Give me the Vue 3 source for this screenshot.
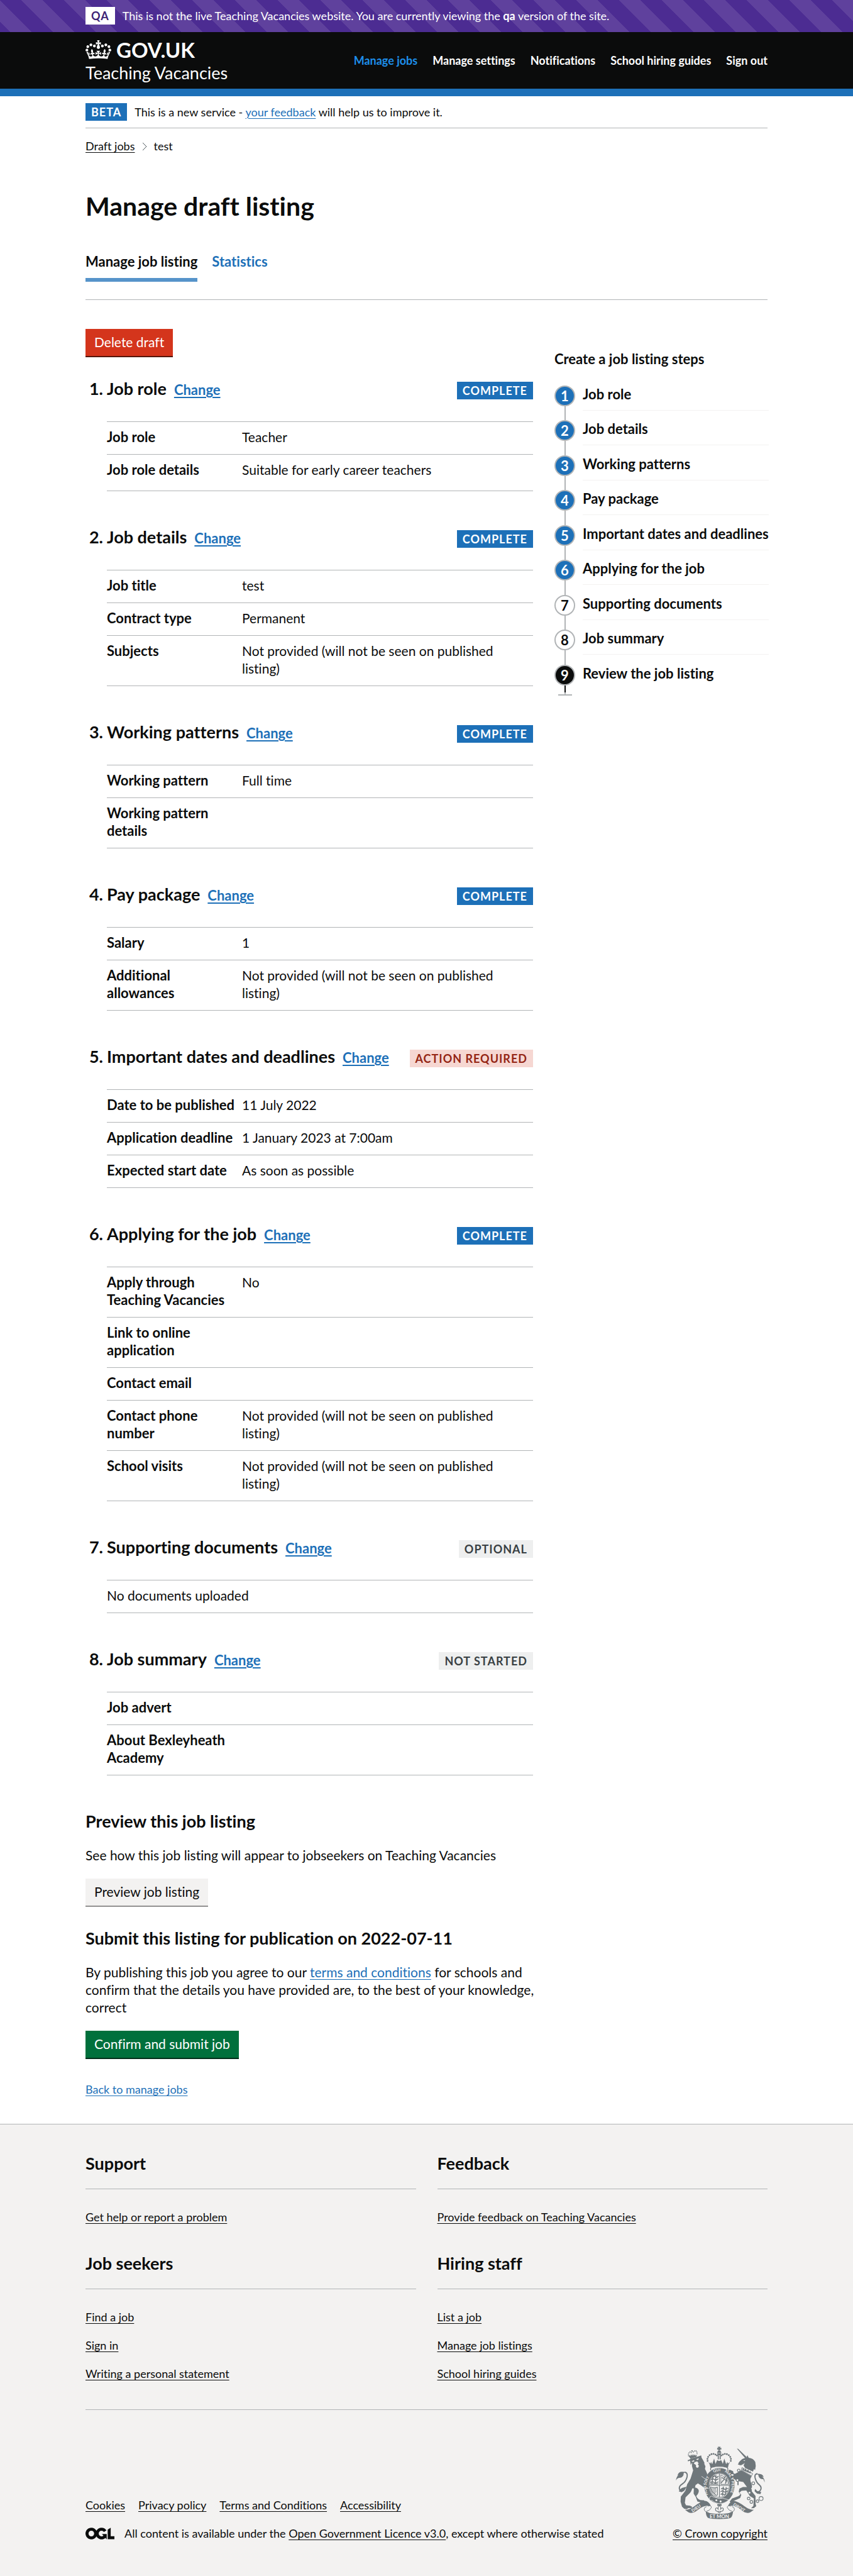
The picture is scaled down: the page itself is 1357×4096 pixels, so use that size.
<script setup>
const nav = [
  { label: 'Manage jobs', active: true },
  { label: 'Manage settings' },
  { label: 'Notifications' },
  { label: 'School hiring guides' },
  { label: 'Sign out' }
]

const missing = 'Not provided (will not be seen on published listing)'

const sections = [
  {
    title: 'Job role', status: 'Complete', tone: 'blue',
    rows: [
      { key: 'Job role', value: 'Teacher' },
      { key: 'Job role details', list: ['Suitable for early career teachers'] }
    ]
  },
  {
    title: 'Job details', status: 'Complete', tone: 'blue',
    rows: [
      { key: 'Job title', value: 'test' },
      { key: 'Contract type', value: 'Permanent' },
      { key: 'Subjects', value: missing }
    ]
  },
  {
    title: 'Working patterns', status: 'Complete', tone: 'blue',
    rows: [
      { key: 'Working pattern', value: 'Full time' },
      { key: 'Working pattern details', value: '' }
    ]
  },
  {
    title: 'Pay package', status: 'Complete', tone: 'blue',
    rows: [
      { key: 'Salary', value: '1' },
      { key: 'Additional allowances', value: missing }
    ]
  },
  {
    title: 'Important dates and deadlines', status: 'Action required', tone: 'red',
    rows: [
      { key: 'Date to be published', value: '11 July 2022' },
      { key: 'Application deadline', value: '1 January 2023 at 7:00am' },
      { key: 'Expected start date', value: 'As soon as possible' }
    ]
  },
  {
    title: 'Applying for the job', status: 'Complete', tone: 'blue',
    rows: [
      { key: 'Apply through Teaching Vacancies', value: 'No' },
      { key: 'Link to online application', value: '' },
      { key: 'Contact email', value: '' },
      { key: 'Contact phone number', value: missing },
      { key: 'School visits', value: missing }
    ]
  },
  { title: 'Supporting documents', status: 'Optional', tone: 'grey', note: 'No documents uploaded' },
  {
    title: 'Job summary', status: 'Not started', tone: 'grey',
    rows: [
      { key: 'Job advert', value: '' },
      { key: 'About Bexleyheath Academy', value: '' }
    ]
  }
]

const steps = [
  { label: 'Job role', state: 'done' },
  { label: 'Job details', state: 'done' },
  { label: 'Working patterns', state: 'done' },
  { label: 'Pay package', state: 'done' },
  { label: 'Important dates and deadlines', state: 'done' },
  { label: 'Applying for the job', state: 'done' },
  { label: 'Supporting documents', state: 'todo' },
  { label: 'Job summary', state: 'todo' },
  { label: 'Review the job listing', state: 'current' }
]

const footerColumns = [
  { title: 'Support', links: ['Get help or report a problem'] },
  { title: 'Feedback', links: ['Provide feedback on Teaching Vacancies'] },
  { title: 'Job seekers', links: ['Find a job', 'Sign in', 'Writing a personal statement'] },
  { title: 'Hiring staff', links: ['List a job', 'Manage job listings', 'School hiring guides'] }
]

const metaLinks = ['Cookies', 'Privacy policy', 'Terms and Conditions', 'Accessibility']

// Pearls along the two arches of the central crown
const pearls = [
  [429, 204], [428, 187], [434, 170], [446, 156], [462, 147], [479, 145], [495, 150], [508, 158],
  [625, 204], [626, 187], [620, 170], [608, 156], [592, 147], [575, 145], [559, 150], [546, 158]
]
const lionPearls = [
  [268, 160], [267, 147], [272, 135], [281, 127], [291, 133],
  [309, 128], [320, 120], [332, 120], [339, 130], [340, 143]
]
</script>

<template>
  <div class="page">
    <div class="env-banner">
      <div class="container env-inner">
        <strong class="tag tag-white">QA</strong>
        <span class="small">This is not the live Teaching Vacancies website. You are currently viewing the <b>qa</b> version of the site.</span>
      </div>
    </div>

    <header class="header">
      <div class="container header-inner">
        <div class="brand">
          <a class="logo" href="#">
            <svg class="crown" viewBox="0 0 132 97" aria-hidden="true">
              <path fill="currentColor" fill-rule="evenodd" d="M25 30.2c3.5 1.5 7.7-.2 9.1-3.7 1.5-3.6-.2-7.8-3.9-9.2-3.6-1.4-7.6.3-9.1 3.9-1.4 3.5.3 7.5 3.9 9zM9 39.5c3.6 1.5 7.8-.2 9.2-3.7 1.5-3.6-.2-7.8-3.9-9.1-3.6-1.5-7.6.2-9.1 3.8-1.4 3.5.3 7.5 3.8 9zM4.4 57.2c3.5 1.5 7.7-.2 9.1-3.8 1.5-3.6-.2-7.7-3.9-9.1-3.5-1.5-7.6.3-9.1 3.8-1.4 3.5.3 7.6 3.9 9.1zm38.3-21.4c3.5 1.5 7.7-.2 9.1-3.8 1.5-3.6-.2-7.7-3.9-9.1-3.6-1.5-7.6.3-9.1 3.8-1.3 3.6.4 7.7 3.9 9.1zm64.4-5.6c-3.6 1.5-7.8-.2-9.1-3.7-1.5-3.6.2-7.8 3.8-9.2 3.6-1.4 7.7.3 9.2 3.9 1.3 3.5-.4 7.5-3.9 9zm15.9 9.3c-3.6 1.5-7.7-.2-9.1-3.7-1.5-3.6.2-7.8 3.7-9.1 3.6-1.5 7.7.2 9.2 3.8 1.5 3.5-.3 7.5-3.8 9zm4.7 17.7c-3.6 1.5-7.8-.2-9.2-3.8-1.5-3.6.2-7.7 3.9-9.1 3.6-1.5 7.7.3 9.2 3.8 1.3 3.5-.4 7.6-3.9 9.1zM89.3 35.8c-3.6 1.5-7.8-.2-9.2-3.8-1.4-3.6.2-7.7 3.9-9.1 3.6-1.5 7.7.3 9.2 3.8 1.4 3.6-.3 7.7-3.9 9.1zM69.7 17.7l8.9 4.7V9.3l-8.9 2.8c-.2-.3-.5-.6-.9-.9L72.4 0H59.6l3.5 11.2c-.3.3-.6.5-.9.9l-8.8-2.8v13.1l8.8-4.7c.3.3.6.7.9.9l-5 15.4v.1c-.2.8-.4 1.6-.4 2.4 0 4.1 3.1 7.5 7 8.1h.2c.3 0 .7.1 1 .1.4 0 .7 0 1-.1h.2c4-.6 7.1-4.1 7.1-8.1 0-.8-.1-1.7-.4-2.4V34l-5.1-15.4c.4-.2.7-.6 1-.9zM66 92.8c16.9 0 32.8 1.1 47.1 3.2 4-16.9 8.9-26.7 14-33.5l-9.6-3.4c1 4.9 1.1 7.2 0 10.2-1.5-1.4-3-4.3-4.2-8.7L108.6 76c2.8-2 5-3.2 7.5-3.3-4.4 9.4-10 11.9-13.6 11.2-4.3-.8-6.3-4.6-5.6-7.9 1-4.7 5.7-5.9 8-.5 4.3-8.7-3-11.4-7.6-8.8 7.1-7.2 7.9-13.5 2.1-21.1-8 6.1-8.1 12.3-4.5 20.8-4.7-5.4-12.1-2.5-9.5 6.2 3.4-5.2 7.9-2 7.2 3.1-.6 4.3-6.4 7.8-13.5 7.2-10.3-.9-10.9-8-11.2-13.8 2.5-.5 7.1 1.8 11 7.3L80.2 60c-4.1 4.4-8 5.3-12.3 5.4 1.4-4.4 8-11.6 8-11.6H55.5s6.4 7.2 7.9 11.6c-4.2-.1-8-1-12.3-5.4l1.4 16.4c3.9-5.5 8.5-7.7 10.9-7.3-.3 5.8-.9 12.8-11.1 13.8-7.2.6-12.9-2.9-13.5-7.2-.7-5 3.8-8.3 7.1-3.1 2.7-8.7-4.6-11.6-9.4-6.2 3.7-8.5 3.6-14.7-4.6-20.8-5.8 7.6-5 13.9 2.2 21.1-4.7-2.6-11.9.1-7.7 8.8 2.3-5.5 7.1-4.2 8.1.5.7 3.3-1.3 7.1-5.7 7.9-3.5.7-9-1.8-13.5-11.2 2.5.1 4.7 1.3 7.5 3.3l-4.7-15.4c-1.2 4.4-2.7 7.2-4.3 8.7-1.1-3-.9-5.3 0-10.2l-9.5 3.4c5 6.9 9.9 16.7 14 33.5 14.8-2.1 30.8-3.2 47.7-3.2z" />
            </svg>
            <span>GOV.UK</span>
          </a>
          <a class="service" href="#">Teaching Vacancies</a>
        </div>
        <nav class="nav" aria-label="Main">
          <a v-for="item in nav" :key="item.label" href="#" :class="{ active: item.active }">{{ item.label }}</a>
        </nav>
      </div>
    </header>

    <div class="container">
      <div class="phase">
        <strong class="tag tag-blue">BETA</strong>
        <span class="small">This is a new service - <a class="link" href="#">your feedback</a> will help us to improve it.</span>
      </div>
      <nav class="crumbs small" aria-label="Breadcrumb">
        <a href="#">Draft jobs</a>
        <svg class="chevron" viewBox="0 0 8 14" aria-hidden="true"><path d="M1 1l6 6-6 6" fill="none" stroke="#505a5f" stroke-width="1" /></svg>
        <span>test</span>
      </nav>
    </div>

    <main class="container main">
      <h1>Manage draft listing</h1>
      <nav class="tabs" aria-label="Listing">
        <a href="#" class="selected">Manage job listing</a>
        <a href="#">Statistics</a>
      </nav>

      <div class="columns">
        <div class="content">
          <button type="button" class="button button-red">Delete draft</button>

          <section v-for="(s, i) in sections" :key="s.title" class="section">
            <div class="section-head">
              <span class="number">{{ i + 1 }}.</span>
              <h2>{{ s.title }}</h2>
              <a class="link change" href="#">Change</a>
              <strong class="tag status" :class="'tag-' + s.tone">{{ s.status }}</strong>
            </div>
            <dl v-if="s.rows" class="summary">
              <div v-for="r in s.rows" :key="r.key" class="row">
                <dt>{{ r.key }}</dt>
                <dd>
                  <ul v-if="r.list"><li v-for="v in r.list" :key="v">{{ v }}</li></ul>
                  <template v-else>{{ r.value }}</template>
                </dd>
              </div>
            </dl>
            <div v-else class="summary"><p class="row">{{ s.note }}</p></div>
          </section>

          <h2 class="block-title">Preview this job listing</h2>
          <p class="body">See how this job listing will appear to jobseekers on Teaching Vacancies</p>
          <button type="button" class="button button-grey">Preview job listing</button>

          <h2 class="block-title">Submit this listing for publication on 2022-07-11</h2>
          <p class="body">By publishing this job you agree to our <a class="link" href="#">terms and conditions</a> for schools and confirm that the details you have provided are, to the best of your knowledge, correct</p>
          <button type="button" class="button button-green">Confirm and submit job</button>
          <a class="link small back" href="#">Back to manage jobs</a>
        </div>

        <aside class="sidebar">
          <h2>Create a job listing steps</h2>
          <ol class="steps">
            <li v-for="(step, i) in steps" :key="step.label" :class="step.state">
              <span class="circle">{{ i + 1 }}</span>
              <span class="step-label">{{ step.label }}</span>
            </li>
          </ol>
        </aside>
      </div>
    </main>

    <footer class="footer">
      <div class="container">
        <div class="footer-nav">
          <div v-for="c in footerColumns" :key="c.title">
            <h2>{{ c.title }}</h2>
            <ul class="small">
              <li v-for="l in c.links" :key="l"><a href="#">{{ l }}</a></li>
            </ul>
          </div>
        </div>
        <div class="meta small">
          <div class="meta-main">
            <div class="meta-links">
              <a v-for="l in metaLinks" :key="l" href="#">{{ l }}</a>
            </div>
            <div class="licence">
              <svg class="ogl" viewBox="0 0 483.2 195.7" aria-hidden="true">
                <path fill="currentColor" d="M421.5 142.8V.1l-50.7 32.3v161.1h112.4v-50.7zm-122.3-9.6A47.12 47.12 0 0 1 221 97.8c0-26 21.1-47.1 47.1-47.1 16.7 0 31.4 8.7 39.7 21.8l42.7-27.2A97.63 97.63 0 0 0 268.1 0c-36.5 0-68.3 20.1-85.1 49.7A98 98 0 0 0 97.8 0C43.9 0 0 43.9 0 97.8s43.9 97.8 97.8 97.8c36.5 0 68.3-20.1 85.1-49.7a97.76 97.76 0 0 0 149.6 25.4l19.4 22.2h3v-87.8h-80l24.3 27.5zM97.8 145c-26 0-47.1-21.1-47.1-47.1s21.1-47.1 47.1-47.1 47.1 21.1 47.1 47.1S123.8 145 97.8 145" />
              </svg>
              <span>All content is available under the <a href="#">Open Government Licence v3.0</a>, except where otherwise stated</span>
            </div>
          </div>
          <a class="copyright" href="#">
            <svg class="crest" viewBox="160 82 754 616" aria-hidden="true">
              <g fill="#6f777b">
                <!-- Crown -->
                <path d="M515 84h24l-6 13 12-5v18l-12-5 5 12h-22l5-12-11 5V92l11 5z" />
                <path d="M509 136q3-18 18-18t19 18z M509 140h37q-3 16-19 16t-18-16z" />
                <rect x="515" y="157" width="9" height="34" /><rect x="531" y="157" width="9" height="34" />
                <circle v-for="(p, i) in pearls" :key="i" :cx="p[0]" :cy="p[1]" r="7.5" />
                <path d="M436 213l17 14 5-15 10 20 16-48 12 46 14-32 17 8 17-8 14 32 12-46 16 48 10-20 5 15 17-14q-14 20-17 48-74-30-148 0-3-28-17-48z" />
                <path d="M456 282q-8-22 16-25 55-14 112 0 22 5 15 25" fill="none" stroke="#6f777b" stroke-width="7" />
                <!-- Garter -->
                <path fill-rule="evenodd" d="M529 264c-72 0-128 62-128 146s56 154 128 154 128-70 128-154-56-146-128-146zm0 42c49 0 89 46 89 105s-40 107-89 107-89-48-89-107 40-105 89-105z" />
                <ellipse cx="529" cy="411" rx="84" ry="101" fill="#f3f2f1" stroke="#6f777b" stroke-width="5" />
                <path d="M526 310h6v202h-6zM443 408h172v6H443z" />
                <g fill="none" stroke="#6f777b" stroke-width="8" stroke-linecap="round">
                  <path d="M480 338q9-12 18 0t20-4M462 361q13-12 24 0t31-5M455 386q14-10 28 0t34-4M454 399h62M474 332l-8 64M500 328l-5 66" />
                  <path d="M546 440q12-12 22 0t32-5M541 463q13-11 25 0t31-5M542 486q11-10 20 0t18-4M562 425l-7 70M586 428l-6 56" />
                  <path d="M545 388l25-30 20 14-10 22M550 346l18 6 12-18M592 350l-10 34" />
                </g>
                <path d="M541 322v80h64q-2-50-64-80z" fill="none" stroke="#6f777b" stroke-width="5" />
                <path d="M454 426q30 10 58 2v64q-16 6-22-8-32-18-36-58z" fill="none" stroke="#6f777b" stroke-width="6" />
                <path d="M464 434q4 36 28 48M474 434q2 30 20 44M485 434q2 26 12 38M496 433q0 20 6 32" fill="none" stroke="#6f777b" stroke-width="4" />
                <path d="M452 505q10-10 22 2l22 6q30 14 62 6l50 14q-38 34-82 32-40-6-58-28-16 8-22-6-6-14 6-26z" stroke="#f3f2f1" stroke-width="4" />
                <!-- Lion -->
                <path d="M262 150l8-22 12-8 12 8 6-10 12 8 16-8 14 12 2 34-54 16-8 8-14-20z" fill="#f3f2f1" />
                <circle v-for="(p, i) in lionPearls" :key="'l' + i" :cx="p[0]" :cy="p[1]" r="4.5" />
                <path d="M271 166l8-14 5 12 8-16 6 14 9-16 5 14 12-12 2 12 12-8-2 18-52 14zM290 116l12-2 2 10-10 2z" />
                <path d="M264 208l-3-10 14-4 12-10 52-14 36-12 3 18 12 20 15 30-6-2 12 26-4 22 10 20 14 34-10-2 12 28-2 28 8 38-4 22-20 22-10-10-6-22-28-22-24-14-20 14-4 20q30 6 32 30-2 24-22 42 14 40 64 36l14 14-18 8-22-4-28-8-14-38-18-28 2-44-14 0q-6 30-32 52l-24 24-6 46 10 20 34 4 18 10-6 12-24-2-18 10-20-4-18-18-12-42 2-42 38-50 16-56 28-46 22-70-10-36 2-30-12 20-6-36z" />
                <path d="M292 208l22-10 4 10-14 4zM334 190l20-8-2 10-12 6zM312 226l10-12 20-6 12 18-8 6 10 14-6 14-12 2-8-12 2-10z" fill="#f3f2f1" />
                <path d="M378 334l44 32" stroke="#f3f2f1" stroke-width="4" />
                <path d="M416 430l20 6M406 440l14-4" stroke="#f3f2f1" stroke-width="6" />
                <path d="M236 300q26 2 20 38-10 42-42 62-30 18-22 44 14 10 36 4" fill="none" stroke="#6f777b" stroke-width="10" />
                <path d="M162 372q2-34 22-48-8 2-10 8 6-34 34-36 24-2 44 6-30-4-26 20-10 26-40 26-20 6-24 24zM192 448l20-16 40-10-20 34-22 12-24-6z" />
                <!-- Unicorn -->
                <path d="M677 100l10 2 73 70-14 8z" />
                <path d="M690 222l10-14 22-20 36-14 8-18 10 22q40 4 56 36l4 32-6 36-8-10-10 22-66-30-12-20-2-16-18 14-16-4-14-4 8-10z" />
                <path d="M730 200l18-2-8 8zM708 240q24-2 34-20-2 26-30 30z" fill="#f3f2f1" />
                <path d="M720 260l90 52-10 18-86-48z" fill="#f3f2f1" stroke="#6f777b" stroke-width="5" />
                <path d="M722 278l8-16 10 20 10-16 10 26 12-18 8 28 12-14 2 24-70-30z" />
                <path d="M714 284l88 50q-16 20-10 42l12 36-2 48 32 40v64l6 22-20 16-24 2 20-20 4-62-34-22-30-46-40 2-18 16 16 18-10 28-58 26-24 12-6-10 20-24 54-20 16-14-14-24 6-26 30-14 34 0-32-42-48-8-40-24 14 24 4 18-20-14-16 4-6-24-16-18 12-8 28 0 14-16-36 0-12-16-4-14 12-8 28 12 6 26 14-4z" />
                <path d="M636 306l26 16 24 0M656 352l24 0 6 30 0 26" stroke="#6f777b" stroke-width="10" fill="none" />
                <path d="M850 312q-26 2-20 34 10 40 36 60 26 24 8 48-14 16-36 12" fill="none" stroke="#6f777b" stroke-width="10" />
                <path d="M912 386q-2-34-22-50 10 0 14 8-8-28-34-30-24-2-34 4 24-4 24 16 10 26 40 24 8 22 12 28zM830 440l22 22 30 4-6 18-28-4-22-20z" />
                <g fill="#f3f2f1">
                  <circle cx="806" cy="438" r="8" /><circle cx="783" cy="472" r="8" /><circle cx="503" cy="536" r="8" /><circle cx="539" cy="546" r="8" />
                </g>
                <g fill="#f3f2f1" stroke="#6f777b" stroke-width="6">
                  <circle cx="692" cy="284" r="11" /><circle cx="681" cy="366" r="11" /><circle cx="815" cy="393" r="12" />
                  <circle cx="776" cy="521" r="11" /><circle cx="799" cy="550" r="12" /><circle cx="851" cy="544" r="11" /><circle cx="881" cy="522" r="17" />
                </g>
                <!-- Fleur-de-lis -->
                <path d="M511 568h36v16h-36z" />
                <path d="M529 582q-18 16-8 34-14-24-24-10-4 22 14 24h36q18-2 14-24-10-14-24 10 10-18-8-34zM514 632l14 12 14-12" fill="none" stroke="#6f777b" stroke-width="6" />
                <!-- Ribbon -->
                <path d="M236 616q34 6 80-28 54-40 90-46 30 0 50 40-14-2-40 2-34 6-66 32-48 40-82 22z" />
                <path d="M822 616q-34 6-80-28-54-40-90-46-30 0-50 40 14-2 40 2 34 6 66 32 48 40 82 22z" />
                <path d="M430 586q34-10 30 14-12 24-40 30M420 590q-20 6-20 22 2 22 38 30M626 586q-34-10-30 14 12 24 40 30M636 590q20 6 20 22-2 22-38 30" fill="none" stroke="#6f777b" stroke-width="5" />
                <path d="M414 630q12 10 40 16 74 10 148 0 28-6 42-16-2 36-18 54-20 12-98 12t-98-12q-16-20-16-54z" />
              </g>
              <path id="motto-left" d="M434 490Q396 410 444 346Q456 328 476 312" fill="none" />
              <path id="motto-top" d="M480 303Q530 278 580 303" fill="none" />
              <path id="motto-right" d="M572 296Q640 340 632 410Q632 470 590 524" fill="none" />
              <g fill="#f3f2f1" font-weight="700" font-size="32">
                <text><textPath href="#motto-left">HON SOIT</textPath></text>
                <text><textPath href="#motto-top">QUI</textPath></text>
                <text><textPath href="#motto-right">MAL Y PENSE</textPath></text>
                <text transform="translate(304 638) rotate(-34)" font-size="36">DIEU</text>
                <text transform="translate(642 578) rotate(32)" font-size="36">DROIT</text>
                <text x="529" y="686" text-anchor="middle" font-size="42">ET MON</text>
              </g>
            </svg>
            <span>© Crown copyright</span>
          </a>
        </div>
      </div>
    </footer>
  </div>
</template>

<style>
body {
  margin: 0;
  background: #ffffff;
}
</style>

<style scoped>
.page {
  font-family: Lato, "Liberation Sans", sans-serif;
  font-size: 21px;
  line-height: 28px;
  font-variant-ligatures: none;
  color: #0b0c0c;
}

.page *,
.page *::before,
.page *::after {
  box-sizing: border-box;
}

.container {
  max-width: 1085px;
  margin: 0 auto;
}

h1, h2, p, ul, ol, dl, dd {
  margin: 0;
  padding: 0;
}

ul, ol {
  list-style: none;
}

h2 {
  font-size: 27px;
  line-height: 34px;
}

a {
  color: inherit;
  text-underline-offset: 3px;
  text-decoration-thickness: 1px;
}

.link {
  color: #1d70b8;
}

.small {
  font-size: 18px;
  line-height: 23px;
}

.tag {
  padding: 0 9px;
  font-size: 18px;
  line-height: 28px;
  letter-spacing: 1px;
  text-transform: uppercase;
  white-space: nowrap;
}

.tag-white {
  background: #ffffff;
  color: #3d2375;
}

.tag-blue {
  background: #1d70b8;
  color: #ffffff;
}

.tag-red {
  background: #f6d7d2;
  color: #942514;
}

.tag-grey {
  background: #eeefef;
  color: #383f43;
}

/* Environment banner */
.env-banner {
  padding: 11px 0 12px;
  color: #ffffff;
  background: repeating-linear-gradient(45deg, #4c2c92 0 12px, #5f419d 12px 36px, #4c2c92 36px 48px);
}

.env-inner {
  display: flex;
  align-items: center;
  gap: 12px;
}

/* Header */
.header {
  background: #0b0c0c;
  border-bottom: 12px solid #1d70b8;
  color: #ffffff;
}

.header-inner {
  display: flex;
  justify-content: space-between;
  align-items: center;
  padding: 11px 0;
}

.header a {
  text-decoration: none;
}

.brand {
  display: flex;
  flex-direction: column;
  gap: 6px;
}

.logo {
  display: flex;
  align-items: center;
  gap: 8px;
  font-size: 33px;
  font-weight: 700;
  line-height: 34px;
}

.crown {
  width: 41px;
  height: 30px;
}

.service {
  font-size: 27px;
  line-height: 28px;
}

.nav {
  display: flex;
  gap: 24px;
  font-size: 18px;
  font-weight: 700;
}

.nav .active {
  color: #1d8feb;
}

/* Phase banner and breadcrumbs */
.phase {
  display: flex;
  align-items: center;
  gap: 12px;
  padding: 11px 0;
  border-bottom: 1px solid #b1b4b6;
}

.crumbs {
  display: flex;
  align-items: center;
  gap: 11px;
  padding-top: 17px;
}

.chevron {
  width: 8px;
  height: 14px;
}

/* Main */
.main {
  padding: 61px 0 42px;
}

h1 {
  font-size: 41px;
  line-height: 46px;
}

.tabs {
  display: flex;
  gap: 23px;
  margin-top: 51px;
  padding-bottom: 28px;
  border-bottom: 1px solid #b1b4b6;
  font-size: 22px;
  font-weight: 700;
}

.tabs a {
  padding-bottom: 12px;
  border-bottom: 6px solid transparent;
  color: #1d70b8;
  text-decoration: none;
}

.tabs .selected {
  border-color: #5694ca;
  color: #0b0c0c;
}

.columns {
  display: grid;
  grid-template-columns: minmax(0, 21fr) minmax(0, 10fr);
  gap: 34px;
  padding-top: 46px;
}

.button {
  display: block;
  padding: 7px 14px 8px;
  border: 0;
  font: inherit;
  color: #ffffff;
  margin-bottom: 35px;
}

.button-red {
  background: #d4351c;
  box-shadow: 0 2px 0 #55150b;
}

.button-grey {
  background: #f3f2f1;
  box-shadow: 0 2px 0 #929191;
  color: #0b0c0c;
}

.button-green {
  background: #00703c;
  box-shadow: 0 2px 0 #002d18;
}

.section {
  margin-bottom: 56px;
}

.section-head {
  display: flex;
  align-items: baseline;
  margin-bottom: 35px;
}

.number {
  width: 34px;
  padding-right: 6px;
  text-align: right;
  font-size: 27px;
  font-weight: 700;
}

.change {
  margin-left: 12px;
  font-size: 22px;
  font-weight: 700;
  text-decoration-thickness: 2px;
}

.status {
  align-self: flex-end;
  margin-left: auto;
}

.summary {
  margin-left: 34px;
  border-top: 1px solid #b1b4b6;
}

.row {
  display: flex;
  gap: 8px;
  padding: 10px 0 13px;
  border-bottom: 1px solid #b1b4b6;
}

dt {
  flex: 0 0 207px;
  font-size: 22px;
  font-weight: 700;
}

dd li {
  margin-bottom: 6px;
}

.block-title,
.body {
  margin-bottom: 23px;
}

/* Body copy may run slightly into the column gutter */
.body {
  margin-right: -16px;
}

.back {
  display: inline-block;
}

/* Step list */
.sidebar {
  padding-top: 34px;
}

.sidebar h2 {
  font-size: 22px;
  line-height: 28px;
}

.steps {
  display: grid;
  grid-template-rows: repeat(9, 1fr);
  min-height: 499px;
  margin-top: 28px;
  font-size: 22px;
  font-weight: 700;
}

.steps li {
  position: relative;
  display: flex;
  align-items: flex-start;
  gap: 12px;
}

.steps li::before {
  content: "";
  position: absolute;
  left: 16px;
  top: 33px;
  bottom: 0;
  width: 2px;
  background: #b1b4b6;
}

.circle {
  width: 33px;
  height: 33px;
  border: 2px solid #b1b4b6;
  border-radius: 50%;
  line-height: 29px;
  text-align: center;
}

.done .circle {
  background: #1d70b8;
  color: #ffffff;
}

.current .circle {
  background: #0b0c0c;
  color: #ffffff;
}

.step-label {
  flex: 1;
  margin-right: 22px;
  padding-bottom: 11px;
  border-bottom: 1px solid #f3f2f1;
  white-space: nowrap;
}

.current .step-label {
  border-bottom-color: transparent;
}

.steps .current::before {
  bottom: auto;
  height: 14px;
  background: linear-gradient(#0b0c0c 11px, #b1b4b6 11px);
}

.steps .current::after {
  content: "";
  position: absolute;
  left: 6px;
  top: 47px;
  width: 22px;
  height: 2px;
  background: #b1b4b6;
}

/* Footer */
.footer {
  padding: 45px 0 57px;
  border-top: 1px solid #b1b4b6;
  background: #f3f2f1;
}

.footer-nav {
  display: grid;
  grid-template-columns: 1fr 1fr;
  column-gap: 34px;
  border-bottom: 1px solid #b1b4b6;
}

.footer-nav h2 {
  padding-bottom: 23px;
  border-bottom: 1px solid #b1b4b6;
}

.footer-nav ul {
  padding: 33px 0 23px;
}

.footer-nav li {
  margin-bottom: 22px;
}

.meta {
  display: flex;
  justify-content: space-between;
  align-items: flex-end;
  padding-top: 58px;
}

.meta-links {
  display: flex;
  gap: 21px;
  margin-bottom: 22px;
}

.licence {
  display: flex;
  align-items: center;
  gap: 16px;
}

.ogl {
  width: 46px;
  height: 19px;
}

.copyright {
  display: flex;
  flex-direction: column;
  align-items: center;
  gap: 11px;
}

.crest {
  width: 142px;
  height: 116px;
}
</style>
